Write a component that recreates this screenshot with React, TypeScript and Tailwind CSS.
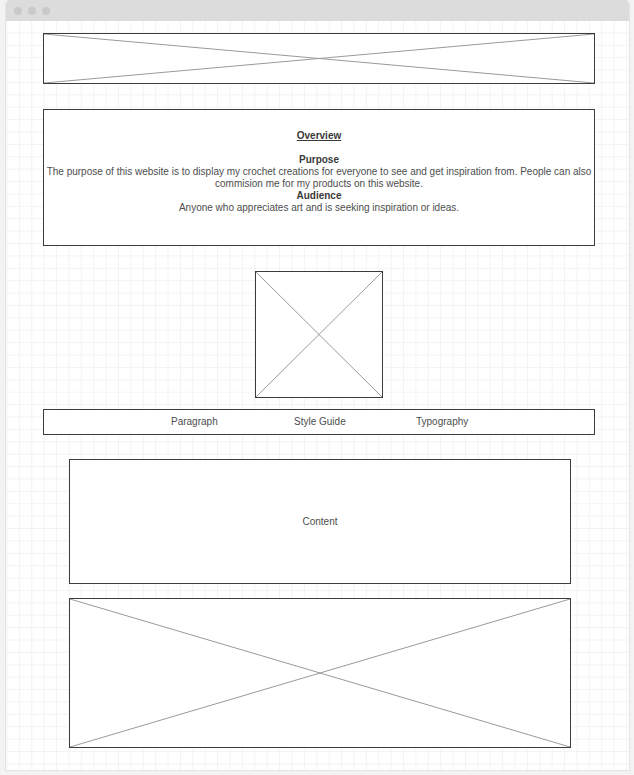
import type { ReactNode } from "react";

// Crossed-box image placeholder
function Placeholder({ className }: { className: string }) {
  return (
    <div className={`relative border border-[#3c3c3c] bg-white ${className}`}>
      <svg
        className="absolute inset-0 h-full w-full"
        viewBox="0 0 100 100"
        preserveAspectRatio="none"
      >
        <line x1="0" y1="0" x2="100" y2="100" stroke="#9a9a9a" strokeWidth="1" vectorEffect="non-scaling-stroke" />
        <line x1="100" y1="0" x2="0" y2="100" stroke="#9a9a9a" strokeWidth="1" vectorEffect="non-scaling-stroke" />
      </svg>
    </div>
  );
}

function Bold({ children }: { children: ReactNode }) {
  return <p className="font-bold text-[#3a3a3a]">{children}</p>;
}

export default function App() {
  return (
    <div className="min-h-[775px] w-[634px] bg-[#f3f3f3] pl-[5px] pr-[4px] pt-0 pb-[4px] font-['Liberation_Sans',Arial,sans-serif] text-[10px] leading-[12px] text-[#4d4d4d]">
      {/* Browser window */}
      <div className="flex h-[771px] flex-col overflow-hidden rounded-t-[5px] border-x border-b border-[#e4e4e4]">
        {/* Title bar */}
        <div className="flex h-[21px] shrink-0 items-center gap-[6px] bg-[#dcdcdc] pl-[8px]">
          <span className="h-[8px] w-[8px] rounded-full bg-[#c9c9c9]" />
          <span className="h-[8px] w-[8px] rounded-full bg-[#c9c9c9]" />
          <span className="h-[8px] w-[8px] rounded-full bg-[#c9c9c9]" />
        </div>

        {/* Canvas with grid */}
        <div className="flex flex-1 flex-col bg-white bg-[linear-gradient(to_right,#f3f3f3_1px,transparent_1px),linear-gradient(to_bottom,#f3f3f3_1px,transparent_1px)] bg-[size:12.4px_12.4px] bg-[position:0.5px_-1px] pl-[37px]">
          <Placeholder className="mt-[12px] h-[51px] w-[552px] shrink-0" />

          {/* Overview */}
          <div className="mt-[25px] flex h-[137px] w-[552px] shrink-0 flex-col items-center border border-[#3c3c3c] bg-white pt-[20px] text-center">
            <p className="font-bold text-[#3a3a3a] underline">Overview</p>
            <div className="h-[12px]" />
            <Bold>Purpose</Bold>
            <p>
              The purpose of this website is to display my crochet creations for everyone to see and get inspiration from. People can also
              <br />
              commision me for my products on this website.
            </p>
            <Bold>Audience</Bold>
            <p>Anyone who appreciates art and is seeking inspiration or ideas.</p>
          </div>

          <Placeholder className="ml-[212px] mt-[25px] h-[127px] w-[128px] shrink-0" />

          {/* Nav */}
          <nav className="mt-[11px] flex h-[26px] w-[552px] shrink-0 items-center border border-[#3c3c3c] bg-white pl-[127px]">
            <span className="w-[123px]">Paragraph</span>
            <span className="w-[122px]">Style Guide</span>
            <span>Typography</span>
          </nav>

          {/* Content */}
          <div className="ml-[26px] mt-[24px] flex h-[125px] w-[502px] shrink-0 items-center justify-center border border-[#3c3c3c] bg-white">
            Content
          </div>

          <Placeholder className="ml-[26px] mt-[14px] h-[150px] w-[502px] shrink-0" />
        </div>
      </div>
    </div>
  );
}
